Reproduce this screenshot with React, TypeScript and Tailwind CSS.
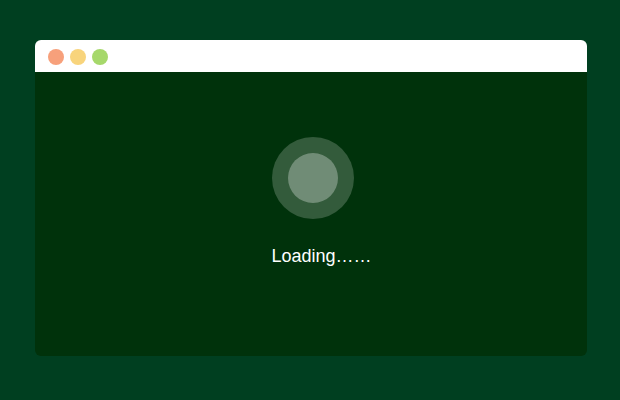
export default function App() {
  return (
    <div className="flex h-[400px] w-[620px] items-start bg-[#003f20] pt-[40px] pl-[35px]">
      <div className="flex h-[316px] w-[552px] flex-col overflow-hidden rounded-[6px]">
        <div className="flex h-[32px] items-start gap-[6px] bg-white pt-[9px] pl-[13px]">
          <span className="h-[16px] w-[16px] rounded-full bg-[#f7a07b]" />
          <span className="h-[16px] w-[16px] rounded-full bg-[#f8d47c]" />
          <span className="h-[16px] w-[16px] rounded-full bg-[#a6d86b]" />
        </div>
        <div className="flex flex-1 flex-col items-center bg-[#00320b] pt-[65px] pl-[4px]">
          <div className="flex h-[82px] w-[82px] items-center justify-center rounded-full bg-white/20">
            <div className="h-[50px] w-[50px] rounded-full bg-white/30" />
          </div>
          <p className="mt-[26px] pl-[17px] font-['Liberation_Sans',Arial,sans-serif] text-[18px] leading-[22px] text-white">
            Loading……
          </p>
        </div>
      </div>
    </div>
  );
}
